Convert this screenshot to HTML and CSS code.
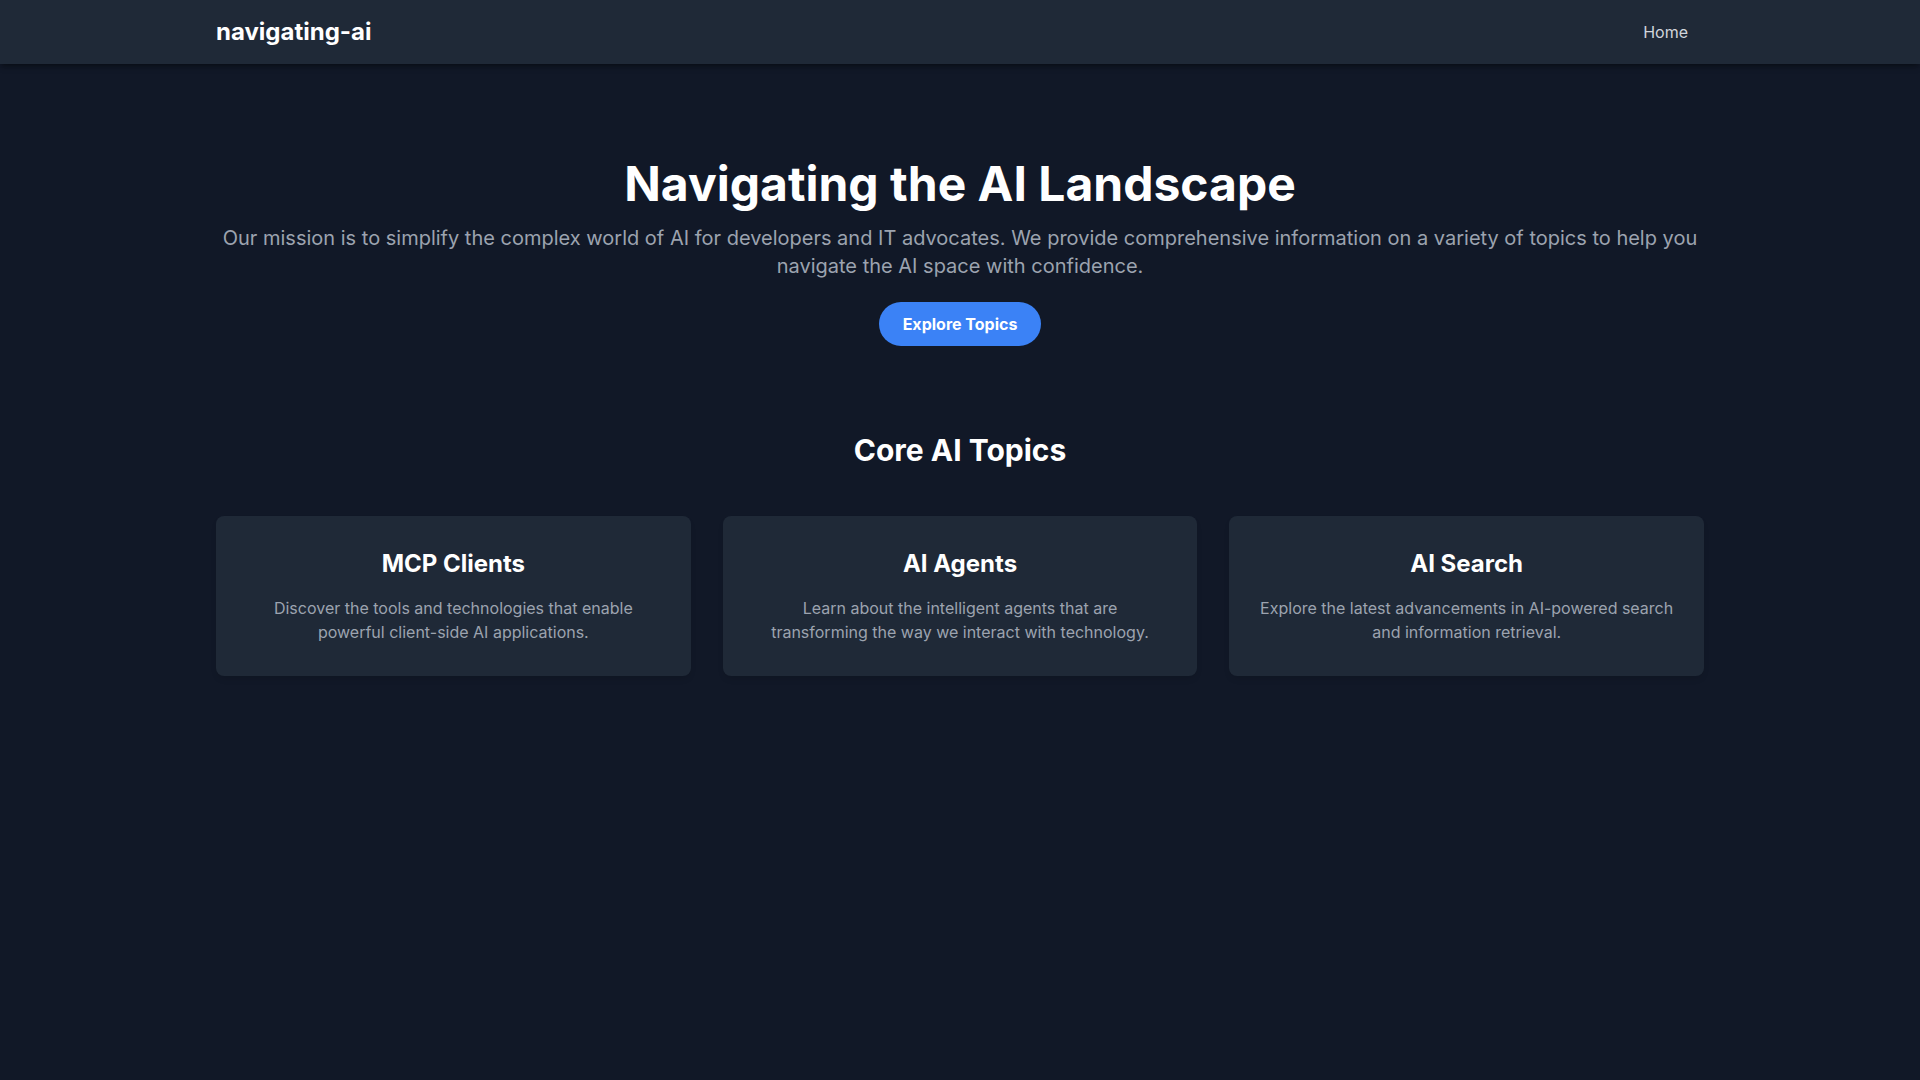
FILE: index.html
```html
<!DOCTYPE html>
<html lang="en">
<head>
<meta charset="utf-8">
<title>navigating-ai</title>
<link rel="stylesheet" href="styles.css">
</head>
<body>
<header class="site-header">
  <div class="container header-inner">
    <a class="logo" href="#">navigating-ai</a>
    <nav class="nav">
      <a class="nav-link" href="#">Home</a>
    </nav>
  </div>
</header>
<main class="container">
  <section class="hero">
    <h1 class="hero-title">Navigating the AI Landscape</h1>
    <p class="hero-text">Our mission is to simplify the complex world of AI for developers and IT advocates. We provide comprehensive information on a variety of topics to help you navigate the AI space with confidence.</p>
    <a class="btn" href="#topics">Explore Topics</a>
  </section>
  <section class="topics" id="topics">
    <h2 class="topics-title">Core AI Topics</h2>
    <div class="cards">
      <div class="card">
        <h3 class="card-title">MCP Clients</h3>
        <p class="card-text">Discover the tools and technologies that enable powerful client-side AI applications.</p>
      </div>
      <div class="card">
        <h3 class="card-title">AI Agents</h3>
        <p class="card-text">Learn about the intelligent agents that are transforming the way we interact with technology.</p>
      </div>
      <div class="card">
        <h3 class="card-title">AI Search</h3>
        <p class="card-text">Explore the latest advancements in AI-powered search and information retrieval.</p>
      </div>
    </div>
  </section>
</main>
</body>
</html>
```
FILE: styles.css
```css
* { box-sizing: border-box; }
html, body { margin: 0; padding: 0; }
body {
  background: #111827;
  color: #ffffff;
  font-family: Inter, "Noto Sans", "Liberation Sans", sans-serif;
  min-height: 100vh;
}
a { text-decoration: none; color: inherit; }
h1, h2, h3, p { margin: 0; }

.container {
  max-width: 1536px;
  margin: 0 auto;
  padding: 0 24px;
}

.site-header {
  background: #1f2937;
  height: 64px;
  box-shadow: 0 4px 6px -1px rgba(0,0,0,0.3), 0 2px 4px -2px rgba(0,0,0,0.3);
  position: relative;
}
.header-inner {
  height: 64px;
  display: flex;
  align-items: center;
  justify-content: space-between;
}
.logo {
  font-size: 24px;
  line-height: 32px;
  font-weight: 700;
  color: #ffffff;
}
.nav { display: flex; }
.nav-link {
  font-size: 16px;
  line-height: 24px;
  color: #d1d5db;
  padding: 8px 16px;
}

.hero {
  padding-top: 96px;
  text-align: center;
  display: flex;
  flex-direction: column;
  align-items: center;
}
.hero-title {
  font-size: 48px;
  line-height: 48px;
  font-weight: 700;
  color: #ffffff;
  margin-bottom: 16px;
}
.hero-text {
  font-size: 20px;
  line-height: 28px;
  color: #9ca3af;
  margin-bottom: 22px;
}
.btn {
  display: inline-block;
  background: #3b82f6;
  color: #ffffff;
  font-size: 16px;
  line-height: 24px;
  font-weight: 700;
  padding: 10px 24px;
  border-radius: 9999px;
}

.topics {
  padding-top: 86px;
}
.topics-title {
  text-align: center;
  font-size: 30px;
  line-height: 36px;
  font-weight: 700;
  color: #ffffff;
  margin-bottom: 48px;
}
.cards {
  display: grid;
  grid-template-columns: repeat(3, 1fr);
  gap: 32px;
}
.card {
  background: #1f2937;
  border-radius: 8px;
  padding: 32px 30px;
  text-align: center;
  box-shadow: 0 4px 6px -1px rgba(0,0,0,0.1);
}
.card-title {
  font-size: 24px;
  line-height: 32px;
  font-weight: 700;
  color: #ffffff;
  margin-bottom: 16px;
}
.card-text {
  font-size: 16px;
  line-height: 24px;
  color: #9ca3af;
}
```
